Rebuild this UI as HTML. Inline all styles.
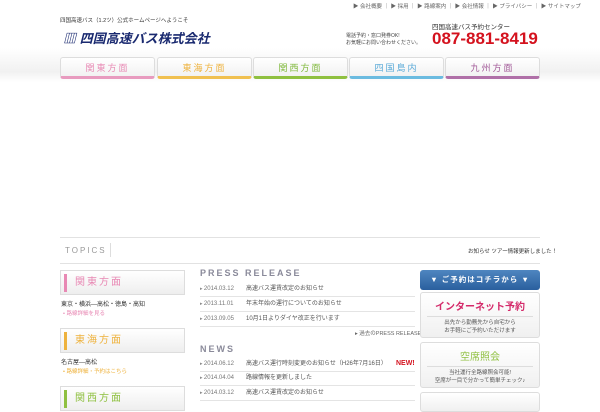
<!DOCTYPE html>
<html><head><meta charset="utf-8"><style>
*{margin:0;padding:0;box-sizing:border-box}
body{width:600px;height:400px;overflow:hidden;background:#fff;font-family:"Liberation Sans","Noto Sans CJK JP",sans-serif;position:relative;color:#333}
.a{position:absolute;white-space:nowrap}
.hdrbg{position:absolute;left:0;top:48px;width:600px;height:34px;background:linear-gradient(#fff,#f1f1f1 70%,#fff)}
.tab{position:absolute;top:57px;width:95px;height:22px;border:1px solid #ddd;border-radius:3px;background:linear-gradient(#fff,#f2f2f2);font-size:9px;text-align:center;line-height:20px;letter-spacing:2px}
.nav{font-size:5.5px;color:#666}
.side{position:absolute;left:60px;width:125px;height:25px;border:1px solid #ddd;background:linear-gradient(#fff,#eee);font-size:10px;letter-spacing:2px;line-height:23px;padding-left:14px}
.side i{position:absolute;left:3px;top:3px;width:3px;height:18px}
.row{position:absolute;left:200px;width:215px;height:15px;border-bottom:1px solid #e4e4e4;font-size:6px;line-height:15px;color:#555}
.row b{font-weight:normal;color:#777;display:inline-block;width:46px}
.row b:before{content:"▸ ";font-size:5px;color:#888}
.box{position:absolute;left:420px;width:120px;border:1px solid #ddd;border-radius:3px;background:linear-gradient(#fff,#f0f0f0);text-align:center}
</style></head><body>
<div class="hdrbg"></div>
<div class="a" style="left:60px;top:16px;font-size:5.5px;color:#333">四国高速バス（1.2ツ）公式ホームページへようこそ</div>
<div class="a" style="left:63px;top:28px;font-size:13px;font-weight:bold;font-style:italic;color:#1a2a70">▥ 四国高速バス株式会社</div>
<div class="a nav" style="left:353px;top:2px">▶ 会社概要 ｜ ▶ 採用 ｜ ▶ 路線案内 ｜ ▶ 会社情報 ｜ ▶ プライバシー ｜ ▶ サイトマップ</div>
<div class="a" style="left:432px;top:21px;font-size:6.5px;color:#333">四国高速バス予約センター</div>
<div class="a" style="left:346px;top:33px;font-size:5px;color:#444;line-height:7px">電話予約・窓口発券OK!<br>お気軽にお問い合わせください。</div>
<div class="a" style="left:432px;top:29px;font-size:17px;font-weight:bold;color:#d4121e">087-881-8419</div>
<div class="tab" style="left:60px;color:#e889b4;border-bottom:3px solid #e89bbf">関東方面</div>
<div class="tab" style="left:157px;color:#eeb23d;border-bottom:3px solid #f0c050">東海方面</div>
<div class="tab" style="left:253px;color:#7fb83a;border-bottom:3px solid #8fc040">関西方面</div>
<div class="tab" style="left:349px;color:#5aaad8;border-bottom:3px solid #6bbbe0">四国島内</div>
<div class="tab" style="left:445px;color:#a25a98;border-bottom:3px solid #b070a8">九州方面</div>
<div class="a" style="left:60px;top:237px;width:480px;border-top:1px solid #e2e2e2"></div>
<div class="a" style="left:65px;top:246px;font-size:8px;letter-spacing:2px;color:#999">TOPICS</div>
<div class="a" style="left:110px;top:243px;height:14px;border-left:1px solid #ddd"></div>
<div class="a" style="left:468px;top:247px;font-size:5.5px;color:#333">お知らせ ツアー情報更新しました！</div>
<div class="a" style="left:60px;top:263px;width:480px;border-top:1px solid #e2e2e2"></div>

<div class="side" style="top:270px;color:#e889b4"><i style="background:#e889b4"></i>関東方面</div>
<div class="a" style="left:61px;top:299px;font-size:6px">東京・横浜―高松・徳島・高知</div>
<div class="a" style="left:63px;top:309px;font-size:5.5px;color:#e889b4">• 路線詳細を見る</div>
<div class="side" style="top:328px;color:#eeb23d"><i style="background:#eeb23d"></i>東海方面</div>
<div class="a" style="left:61px;top:357px;font-size:6px">名古屋―高松</div>
<div class="a" style="left:63px;top:367px;font-size:5.5px;color:#eeb23d">• 路線詳細・予約はこちら</div>
<div class="side" style="top:386px;color:#8fc040"><i style="background:#8fc040"></i>関西方面</div>

<div class="a" style="left:200px;top:268px;font-size:9px;font-weight:bold;letter-spacing:2px;color:#8a8a9a">PRESS RELEASE</div>
<div class="row" style="top:282px"><b>2014.03.12</b>高速バス運賃改定のお知らせ</div>
<div class="row" style="top:297px"><b>2013.11.01</b>年末年始の運行についてのお知らせ</div>
<div class="row" style="top:312px"><b>2013.09.05</b>10月1日よりダイヤ改正を行います</div>
<div class="a" style="left:355px;top:329px;font-size:5.5px;color:#666">▸ 過去のPRESS RELEASE</div>
<div class="a" style="left:200px;top:344px;font-size:9px;font-weight:bold;letter-spacing:2px;color:#8a8a9a">NEWS</div>
<div class="row" style="top:357px"><b>2014.06.12</b>高速バス運行時刻変更のお知らせ（H26年7月16日）</div>
<div class="a" style="left:396px;top:360px;font-size:7px;font-weight:bold;color:#d4121e">NEW!</div>
<div class="row" style="top:371px"><b>2014.04.04</b>路線情報を更新しました</div>
<div class="row" style="top:386px"><b>2014.03.12</b>高速バス運賃改定のお知らせ</div>

<div class="a" style="left:420px;top:270px;width:120px;height:20px;border-radius:3px;background:linear-gradient(#4f86c0,#2a5f9e);color:#fff;font-size:7.5px;font-weight:bold;text-align:center;line-height:20px;letter-spacing:1px">▼ ご予約はコチラから ▼</div>
<div class="box" style="top:292px;height:46px"><div style="font-size:10px;font-weight:bold;color:#d42a6a;margin-top:5px">インターネット予約</div><div style="border-top:1px solid #ddd;margin:3px 6px 0;font-size:5.5px;line-height:8px;padding-top:2px;color:#555">出先から勤務先から自宅から<br>お手軽にご予約いただけます</div></div>
<div class="box" style="top:342px;height:46px"><div style="font-size:10px;color:#8fc040;margin-top:5px">空席照会</div><div style="border-top:1px solid #ddd;margin:3px 6px 0;font-size:5.5px;line-height:8px;padding-top:2px;color:#555">当社運行全路線照会可能!<br>空席が一目で分かって簡単チェック♪</div></div>
<div class="box" style="top:392px;height:20px"></div>
</body></html>
